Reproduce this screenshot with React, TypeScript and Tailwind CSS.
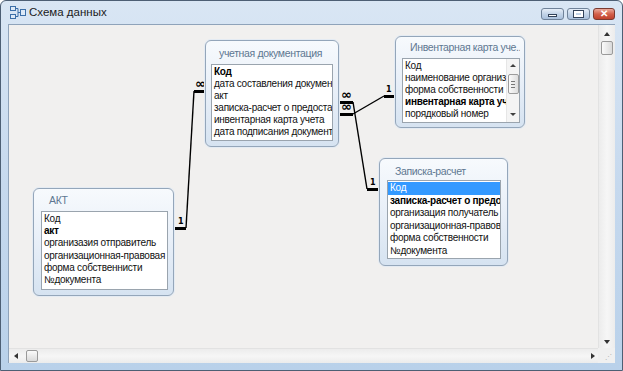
import React from "react";

type Row = { text: string; bold?: boolean; selected?: boolean };

function TableBox({
  title,
  rows,
  boxClass,
  titleClass,
  rowClass = "h-[12px] leading-[12px]",
  scroll = false,
}: {
  title: string;
  rows: Row[];
  boxClass: string;
  titleClass: string;
  rowClass?: string;
  scroll?: boolean;
}) {
  return (
    <div
      className={`absolute flex flex-col rounded-[6px] border border-[#94a6ba] bg-gradient-to-b from-[#f7fafd] via-[#e8eff8] to-[#d6e3f1] shadow-[0_0_0_1px_#e4ebf3] ${boxClass}`}
    >
      <div
        className={`flex shrink-0 items-center overflow-hidden whitespace-nowrap pl-[8px] text-[10.5px] tracking-[-0.35px] text-[#5e7791] ${titleClass}`}
      >
        {title}
      </div>
      <div className="relative flex-1 overflow-hidden border border-[#9aa4ae] bg-white pt-[1px]">
        {rows.map((r) => (
          <div
            key={r.text}
            className={`overflow-hidden whitespace-nowrap pl-[2px] text-[10px] tracking-[-0.25px] ${rowClass} ${
              r.bold ? "font-bold text-black" : "text-[#111]"
            } ${r.selected ? "bg-[#3399ff] text-white" : ""}`}
          >
            {r.text}
          </div>
        ))}
        {scroll && (
          <div className="absolute right-0 top-0 bottom-0 flex w-[13px] flex-col items-center border-l border-[#e6e6e6] bg-[#f4f4f4]">
            <div className="mt-[5px] h-0 w-0 border-x-[3px] border-b-[3px] border-x-transparent border-b-[#404040]" />
            <div className="mt-[7px] flex h-[20px] w-[11px] flex-col items-center justify-center gap-[2px] rounded-[2px] border border-[#9c9c9c] bg-gradient-to-r from-[#fafafa] to-[#dedede]">
              <div className="h-px w-[4px] bg-[#777]" />
              <div className="h-px w-[4px] bg-[#777]" />
              <div className="h-px w-[4px] bg-[#777]" />
            </div>
            <div className="mt-auto mb-[6px] h-0 w-0 border-x-[3px] border-t-[3px] border-x-transparent border-t-[#404040]" />
          </div>
        )}
      </div>
    </div>
  );
}

function Relations() {
  return (
    <svg className="pointer-events-none absolute inset-0" width="590" height="324">
      <g stroke="#000" fill="none">
        {/* АКТ -> учетная документация */}
        <line x1="165" y1="203.5" x2="177" y2="203.5" strokeWidth="3" />
        <line x1="177" y1="203" x2="185" y2="66" strokeWidth="1.4" />
        <line x1="185" y1="66.5" x2="196" y2="66.5" strokeWidth="3" />
        {/* учетная -> Записка-расчет */}
        <line x1="330" y1="77.5" x2="344" y2="77.5" strokeWidth="3" />
        <line x1="344" y1="77" x2="358" y2="164" strokeWidth="1.4" />
        <line x1="358" y1="164.5" x2="370" y2="164.5" strokeWidth="3" />
        {/* учетная -> Инвентарная карта */}
        <line x1="330" y1="89.5" x2="344" y2="89.5" strokeWidth="3" />
        <line x1="344" y1="89" x2="375" y2="71" strokeWidth="1.4" />
        <line x1="375" y1="71.5" x2="386" y2="71.5" strokeWidth="3" />
      </g>
      <g fontFamily="DejaVu Sans, sans-serif" fontWeight="bold" fill="#000">
        <text x="169" y="199" fontSize="8">1</text>
        <text x="361" y="160" fontSize="8">1</text>
        <text x="377" y="67" fontSize="8">1</text>
        <text x="186" y="63" fontSize="13">∞</text>
        <text x="332" y="74" fontSize="13">∞</text>
        <text x="332" y="86" fontSize="13">∞</text>
      </g>
    </svg>
  );
}

function TitleIcon() {
  return (
    <svg width="16" height="13" viewBox="0 0 16 13" className="shrink-0">
      <rect x="0.5" y="0.5" width="5" height="4" fill="#dce9f7" stroke="#3c6fa8" />
      <rect x="0.5" y="8.5" width="5" height="4" fill="#dce9f7" stroke="#3c6fa8" />
      <rect x="10.5" y="3.5" width="5" height="6" fill="#dce9f7" stroke="#3c6fa8" />
      <path d="M5.5 2.5 H8 V10.5 H5.5 M8 6.5 H10.5" stroke="#3c6fa8" fill="none" />
    </svg>
  );
}

export default function App() {
  return (
    <div className="relative flex h-[371px] w-[623px] flex-col overflow-hidden rounded-t-[6px] border border-[#4d5f74] bg-gradient-to-b from-[#d9e6f4] via-[#c6d9ee] to-[#b9d1ea] font-['Liberation_Sans',Arial,sans-serif]">
      {/* Title bar */}
      <div className="flex h-[23px] shrink-0 items-center pl-[9px] pr-[7px]">
        <TitleIcon />
        <span className="ml-[3px] text-[11.5px] text-[#1b1b1b]">Схема данных</span>
        <div className="ml-auto flex items-center gap-[3px] self-start pt-[7px]">
          <div className="flex h-[12px] w-[23px] items-end justify-center rounded-[3px] border border-[#6f8299] bg-gradient-to-b from-[#e6eef8] via-[#c3d4e8] to-[#a9c0dc] pb-[2px]">
            <div className="h-[3px] w-[9px] border border-[#33435a] bg-white" />
          </div>
          <div className="flex h-[12px] w-[23px] items-center justify-center rounded-[3px] border border-[#6f8299] bg-gradient-to-b from-[#e6eef8] via-[#c3d4e8] to-[#a9c0dc]">
            <div className="h-[6px] w-[9px] border-[2px] border-white outline outline-1 outline-[#33435a]" />
          </div>
          <div className="flex h-[12px] w-[22px] items-center justify-center rounded-[3px] border border-[#7a3a30] bg-gradient-to-b from-[#eaa99b] via-[#d2604b] to-[#c0412c] text-[10px] font-bold leading-none text-white">
            ✕
          </div>
        </div>
      </div>

      {/* Client area */}
      <div className="mx-[7px] mb-[7px] flex flex-1 flex-col border-l border-t border-[#8fa3ba] bg-[#f0f0f0]">
        <div className="flex flex-1">
          {/* Canvas */}
          <div className="relative flex-1 overflow-hidden bg-[#f1f0ef]">
            <Relations />
            <TableBox
              title="учетная документация"
              boxClass="left-[196px] top-[15px] w-[134px] h-[107px] px-[5px] pb-[5px]"
              titleClass="h-[23px] pt-[3px]"
              rows={[
                { text: "Код", bold: true },
                { text: "дата составления документа" },
                { text: "акт" },
                { text: "записка-расчет о предоставлении" },
                { text: "инвентарная карта учета" },
                { text: "дата подписания документа" },
              ]}
            />
            <TableBox
              title="Инвентарная карта уче..."
              boxClass="left-[386px] top-[11px] w-[130px] h-[92px] pl-[6px] pr-[4px] pb-[4px]"
              titleClass="h-[21px]"
              scroll
              rows={[
                { text: "Код" },
                { text: "наименование организации" },
                { text: "форма собственности" },
                { text: "инвентарная карта учета", bold: true },
                { text: "порядковый номер" },
              ]}
            />
            <TableBox
              title="Записка-расчет"
              boxClass="left-[370px] top-[133px] w-[129px] h-[108px] pl-[7px] pr-[6px] pb-[6px]"
              titleClass="h-[21px] pt-[5px]"
              rowClass="h-[12.5px] leading-[12.5px]"
              rows={[
                { text: "Код", selected: true },
                { text: "записка-расчет о предоставлении", bold: true },
                { text: "организация получатель" },
                { text: "организационная-правовая форма" },
                { text: "форма собственности" },
                { text: "№документа" },
              ]}
            />
            <TableBox
              title="АКТ"
              boxClass="left-[24px] top-[163px] w-[141px] h-[108px] pl-[7px] pr-[5px] pb-[5px]"
              titleClass="h-[22px] pt-[2px]"
              rowClass="h-[12.2px] leading-[12.2px]"
              rows={[
                { text: "Код" },
                { text: "акт", bold: true },
                { text: "организазия отправитель" },
                { text: "организационная-правовая форма" },
                { text: "форма собственнисти" },
                { text: "№документа" },
              ]}
            />
          </div>
          {/* Vertical scrollbar */}
          <div className="flex w-[17px] flex-col items-center border-l border-[#e2e2e2] bg-gradient-to-r from-[#ececec] via-[#f6f6f6] to-[#ececec]">
            <div className="mt-[7px] h-0 w-0 border-x-[3px] border-b-[4px] border-x-transparent border-b-[#333]" />
            <div className="mt-[5px] h-[14px] w-[12px] rounded-[2px] border border-[#9a9a9a] bg-gradient-to-r from-[#fbfbfb] to-[#dadada]" />
            <div className="mt-auto mb-[4px] h-0 w-0 border-x-[3px] border-t-[4px] border-x-transparent border-t-[#333]" />
          </div>
        </div>
        {/* Horizontal scrollbar */}
        <div className="flex h-[15px] shrink-0">
          <div className="flex flex-1 items-center border-t border-[#e2e2e2] bg-gradient-to-b from-[#ececec] via-[#f6f6f6] to-[#ececec]">
            <div className="ml-[5px] h-0 w-0 border-y-[3px] border-r-[4px] border-y-transparent border-r-[#333]" />
            <div className="ml-[8px] h-[12px] w-[12px] rounded-[2px] border border-[#9a9a9a] bg-gradient-to-b from-[#fbfbfb] to-[#dadada]" />
            <div className="ml-auto mr-[3px] h-0 w-0 border-y-[3px] border-l-[4px] border-y-transparent border-l-[#333]" />
          </div>
          <div className="relative w-[17px] bg-[#f0f0f0]">
            <div className="absolute right-[3px] bottom-[3px] text-[7px] leading-none text-[#b0b0b0]">⋰</div>
          </div>
        </div>
      </div>
    </div>
  );
}
